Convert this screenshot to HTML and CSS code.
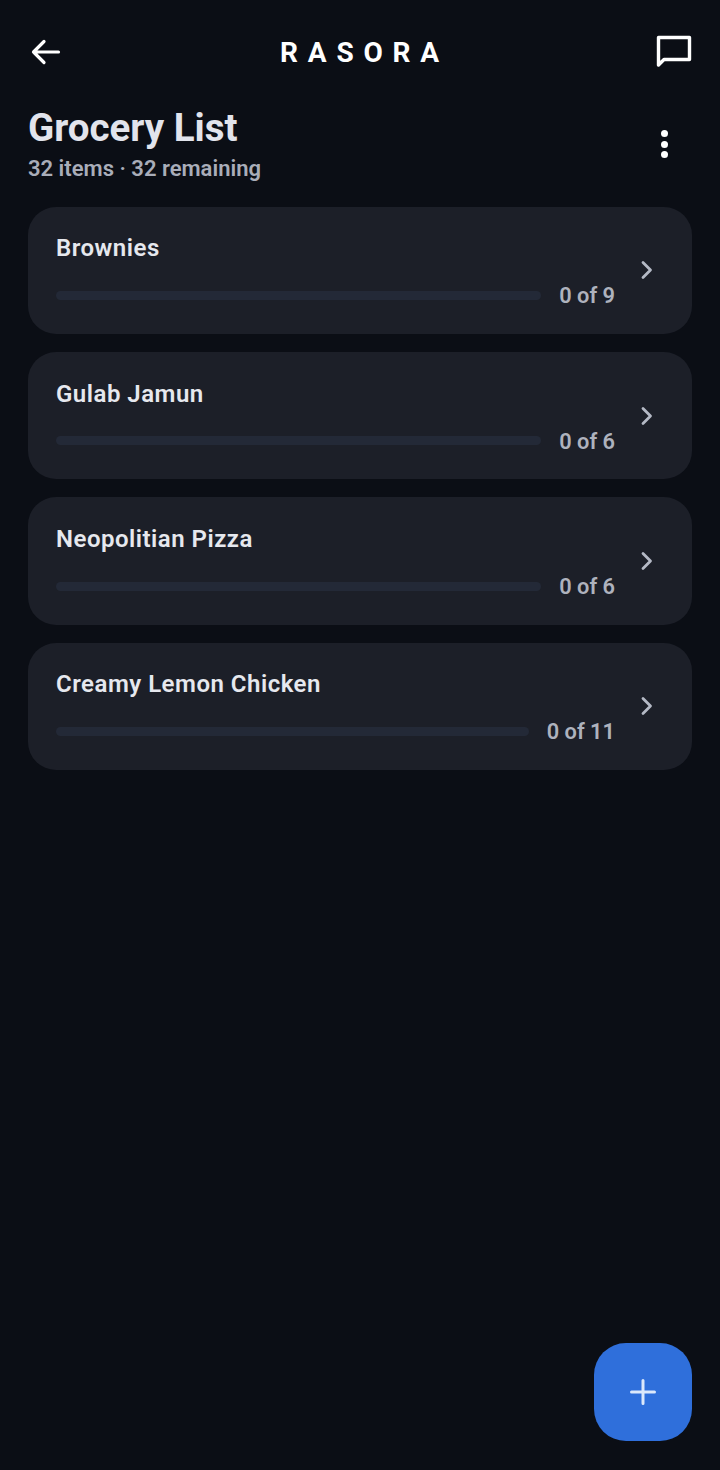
FILE: index.html
```html
<!DOCTYPE html>
<html lang="en">

<head>
    <meta charset="UTF-8">
    <meta name="viewport" content="width=device-width, initial-scale=1.0">
    <title>Grocery List</title>
    <link rel="stylesheet" href="styles.css">
</head>

<body>
    <header class="topbar">
        <svg class="icon-back" width="36" height="36" viewBox="0 0 36 36" fill="none" stroke="#fff" stroke-width="3.200" stroke-linecap="round" stroke-linejoin="round">
            <path d="M30.500 18H5.500M16 7.500L5.500 18 16 28.500"/>
        </svg>
        <div class="brand">RASORA</div>
        <svg class="icon-chat" width="36" height="36" viewBox="0 0 36 36" fill="none" stroke="#fff" stroke-width="3.400" stroke-linejoin="round">
            <path d="M2.500 3.500H33.500V25.500H8L2.500 31Z"/>
        </svg>
    </header>

    <section class="heading">
        <div>
            <h1>Grocery List</h1>
            <p>32 items · 32 remaining</p>
        </div>
        <div class="more"><span></span><span></span><span></span></div>
    </section>

    <main class="list">
        <div class="card">
            <div class="card-body">
                <div class="name">Brownies</div>
                <div class="progress">
                    <div class="bar"></div>
                    <span class="count">0 of 9</span>
                </div>
            </div>
            <svg class="chevron" width="14" height="20" viewBox="0 0 14 20" fill="none" stroke="#b4b9c5" stroke-width="2.800" stroke-linecap="round" stroke-linejoin="round"><path d="M2 2.500L9.500 10 2 17.500"/></svg>
        </div>
        <div class="card">
            <div class="card-body">
                <div class="name">Gulab Jamun</div>
                <div class="progress">
                    <div class="bar"></div>
                    <span class="count">0 of 6</span>
                </div>
            </div>
            <svg class="chevron" width="14" height="20" viewBox="0 0 14 20" fill="none" stroke="#b4b9c5" stroke-width="2.800" stroke-linecap="round" stroke-linejoin="round"><path d="M2 2.500L9.500 10 2 17.500"/></svg>
        </div>
        <div class="card">
            <div class="card-body">
                <div class="name">Neopolitian Pizza</div>
                <div class="progress">
                    <div class="bar"></div>
                    <span class="count">0 of 6</span>
                </div>
            </div>
            <svg class="chevron" width="14" height="20" viewBox="0 0 14 20" fill="none" stroke="#b4b9c5" stroke-width="2.800" stroke-linecap="round" stroke-linejoin="round"><path d="M2 2.500L9.500 10 2 17.500"/></svg>
        </div>
        <div class="card">
            <div class="card-body">
                <div class="name">Creamy Lemon Chicken</div>
                <div class="progress">
                    <div class="bar"></div>
                    <span class="count">0 of 11</span>
                </div>
            </div>
            <svg class="chevron" width="14" height="20" viewBox="0 0 14 20" fill="none" stroke="#b4b9c5" stroke-width="2.800" stroke-linecap="round" stroke-linejoin="round"><path d="M2 2.500L9.500 10 2 17.500"/></svg>
        </div>
    </main>

    <button class="fab" aria-label="Add">
        <svg width="28" height="28" viewBox="0 0 28 28" fill="none" stroke="#dbe8fb" stroke-width="3" stroke-linecap="round"><path d="M14 2.500v23M2.500 14h23"/></svg>
    </button>
</body>

</html>
```

FILE: styles.css
```css
* {
    box-sizing: border-box;
}

html, body {
    height: 100%;
}

body {
    margin: 0;
    background-color: #0b0e15;
    font-family: Roboto, "Liberation Sans", sans-serif;
    color: #e4e7ef;
    overflow: hidden;
}

.topbar {
    display: flex;
    align-items: center;
    justify-content: space-between;
    height: 36px;
    margin-top: 34px;
    padding: 0 28px;
}

.brand {
    font-size: 28px;
    font-weight: 700;
    letter-spacing: 9.8px;
    margin-right: -9px;
    color: #fff;
}

.heading {
    display: flex;
    justify-content: space-between;
    align-items: center;
    padding: 0 28px;
    margin-top: 34px;
}

.heading h1 {
    margin: 0;
    font-size: 38.500px;
    line-height: 48px;
    font-weight: 700;
    color: #e2e4ec;
}

.heading p {
    margin: 0;
    padding-top: 2px;
    font-size: 22px;
    line-height: 30px;
    font-weight: 600;
    color: #a9adb9;
}

.more {
    display: flex;
    flex-direction: column;
    gap: 3.500px;
    margin-right: 24px;
    margin-top: 0;
}

.more span {
    width: 7px;
    height: 7px;
    border-radius: 50%;
    background-color: #fff;
}

.list {
    display: flex;
    flex-direction: column;
    gap: 18px;
    padding: 0 28px;
    margin-top: 22.800px;
}

.card {
    display: flex;
    align-items: center;
    height: 127.330px;
    padding: 0 37px 0 28px;
    border-radius: 28px;
    background-color: #1c1f28;
}

.card-body {
    flex: 1;
    min-width: 0;
    padding-top: 2px;
}

.name {
    font-size: 24px;
    line-height: 32px;
    font-weight: 600;
    letter-spacing: 0.5px;
    color: #e6e8ee;
}

.progress {
    display: flex;
    align-items: center;
    gap: 18px;
    margin-top: 16px;
    padding-right: 26px;
}

.bar {
    flex: 1;
    height: 9px;
    border-radius: 5px;
    background-color: #232937;
}

.count {
    padding-top: 2px;
    font-size: 21.800px;
    line-height: 28px;
    font-weight: 600;
    color: #aeb2bd;
}

.chevron {
    flex: none;
}

.fab {
    position: absolute;
    right: 28px;
    bottom: 29px;
    width: 98px;
    height: 98px;
    display: flex;
    align-items: center;
    justify-content: center;
    padding: 0;
    border: none;
    border-radius: 32px;
    background-color: #2f6fdb;
}
```
